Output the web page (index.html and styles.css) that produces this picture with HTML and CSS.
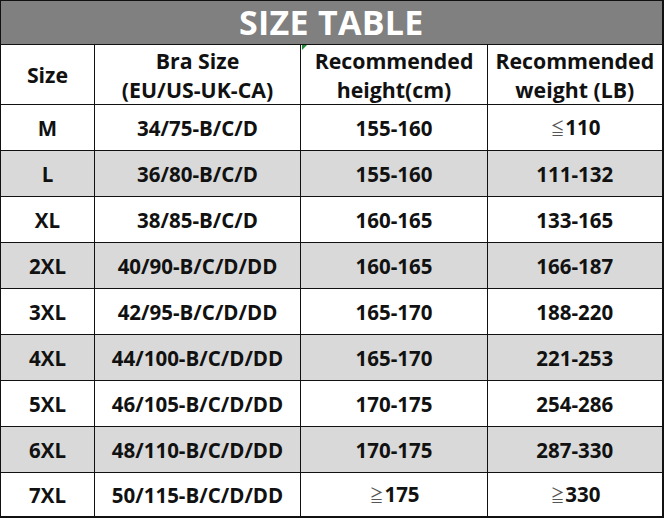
FILE: index.html
```html
<!DOCTYPE html>
<html>
<head>
<meta charset="utf-8">
<link rel="stylesheet" href="styles.css">
</head>
<body>
<table class="size-table">
  <colgroup>
    <col class="c1"><col class="c2"><col class="c3"><col class="c4">
  </colgroup>
  <thead>
    <tr class="title-row"><th colspan="4">SIZE TABLE</th></tr>
    <tr class="head-row">
      <th>Size</th>
      <th>Bra Size<br>(EU/US-UK-CA)</th>
      <th class="marked">Recommended<br>height(cm)</th>
      <th>Recommended<br>weight (LB)</th>
    </tr>
  </thead>
  <tbody>
    <tr><td>M</td><td>34/75-B/C/D</td><td>155-160</td><td><span class="sym">≦</span>110</td></tr>
    <tr class="alt"><td>L</td><td>36/80-B/C/D</td><td>155-160</td><td>111-132</td></tr>
    <tr><td>XL</td><td>38/85-B/C/D</td><td>160-165</td><td>133-165</td></tr>
    <tr class="alt"><td>2XL</td><td>40/90-B/C/D/DD</td><td>160-165</td><td>166-187</td></tr>
    <tr><td>3XL</td><td>42/95-B/C/D/DD</td><td>165-170</td><td>188-220</td></tr>
    <tr class="alt"><td>4XL</td><td>44/100-B/C/D/DD</td><td>165-170</td><td>221-253</td></tr>
    <tr><td>5XL</td><td>46/105-B/C/D/DD</td><td>170-175</td><td>254-286</td></tr>
    <tr class="alt"><td>6XL</td><td>48/110-B/C/D/DD</td><td>170-175</td><td>287-330</td></tr>
    <tr class="last"><td>7XL</td><td>50/115-B/C/D/DD</td><td><span class="sym">≧</span>175</td><td><span class="sym">≧</span>330</td></tr>
  </tbody>
</table>
</body>
</html>
```
FILE: styles.css
```css
html, body {
  margin: 0;
  padding: 0;
  background: #ffffff;
}

.size-table {
  border-collapse: collapse;
  table-layout: fixed;
  width: 663px;
  font-family: "Open Sans", "Noto Sans CJK SC", sans-serif;
  font-weight: 700;
  color: #111111;
  border-left: 1px solid #222;
  border-top: 1px solid #222;
  border-right: 2px solid #111;
  border-bottom: 2px solid #111;
}

.c1 { width: 94px; }
.c2 { width: 206px; }
.c3 { width: 187px; }
.c4 { width: 175px; }

.size-table th,
.size-table td {
  border: 1px solid #111;
  text-align: center;
  vertical-align: middle;
  padding: 0;
}

.title-row th {
  background: #808080;
  color: #ffffff;
  font-size: 34px;
  height: 43px;
  line-height: 43px;
  letter-spacing: 0.3px;
}

.head-row th {
  font-size: 21.3px;
  line-height: 29px;
  height: 59px;
  position: relative;
}

.head-row th.marked::before {
  content: "";
  position: absolute;
  left: 1px;
  top: 0;
  width: 0;
  height: 0;
  border-top: 5px solid #1f8a3a;
  border-right: 5px solid transparent;
}

.size-table td {
  font-size: 20.5px;
  height: 45px;
  line-height: 24px;
}

.size-table tr.last td {
  height: 43px;
}

.size-table tr.alt td {
  background: #d9d9d9;
}

.sym {
  display: inline-block;
  font-weight: 400;
  color: #555;
  font-size: 17px;
  transform: scaleX(0.8);
  margin-right: -1px;
}
```
